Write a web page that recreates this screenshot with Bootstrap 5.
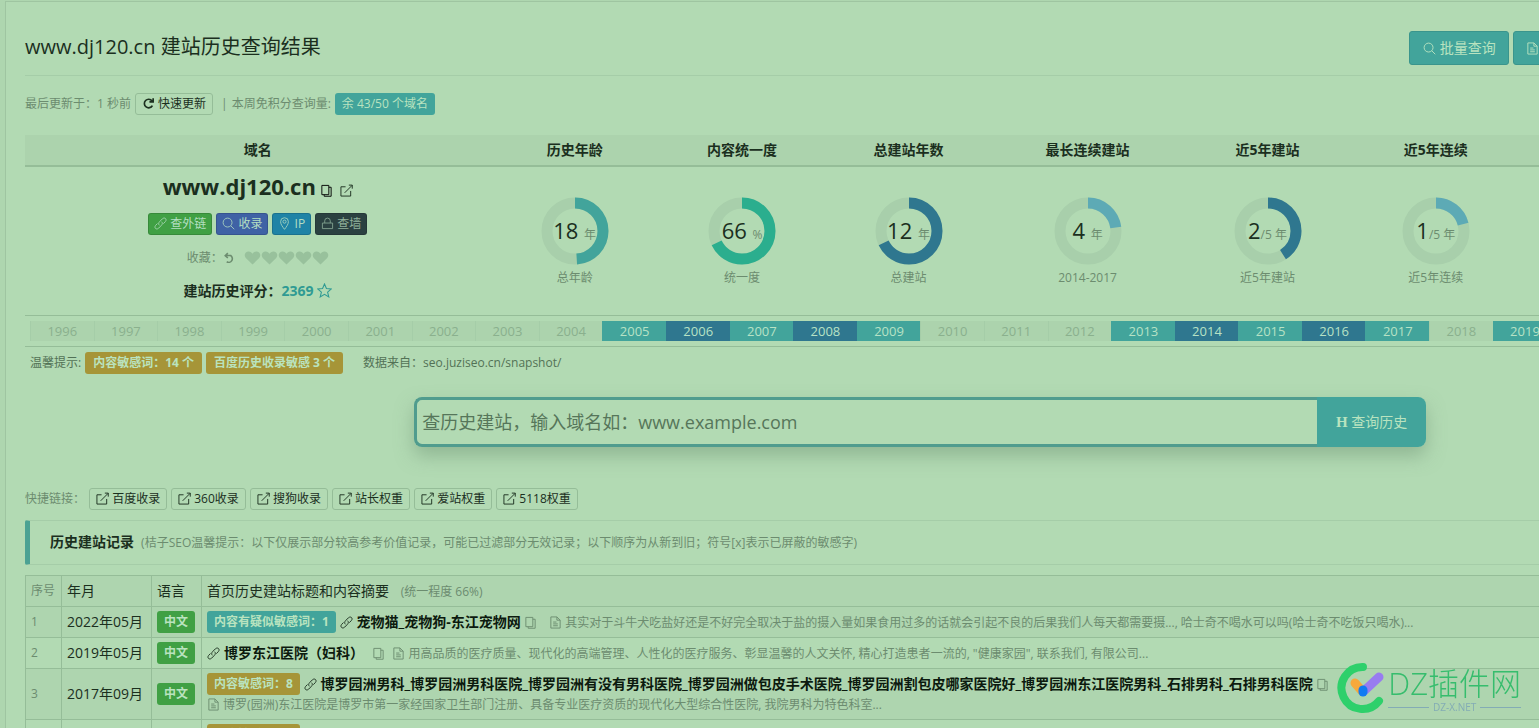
<!DOCTYPE html>
<html lang="zh-CN">
<head>
<meta charset="utf-8">
<meta name="viewport" content="width=device-width, initial-scale=1">
<title>www.dj120.cn 建站历史查询结果</title>
<link href="https://cdn.jsdelivr.net/npm/bootstrap@5.3.0/dist/css/bootstrap.min.css" rel="stylesheet">
<script src="https://cdn.jsdelivr.net/npm/bootstrap@5.3.0/dist/js/bootstrap.bundle.min.js" defer></script>
<style>
:root{--bg:#b2dab3;--shade:#acd3ad;--line:#95bd98;--soft:#a5cda8;--teal:#42a49b;--navy:#2f778f;--ink:#1b2f1e;--dim:#6c8c6f;--pale:#b9e3bf}
body{background:#aed6af;color:var(--ink);font:14px/20px "Open Sans","Noto Sans CJK SC",sans-serif;overflow-x:hidden}
/* the report is wider than the window and runs off its right side */
.panel{width:119vw;min-height:100vh;margin:1px 0 0 5px;padding:0 20px 0 19px;background:var(--bg);border:1px solid #9fc5a1;border-bottom:0}
svg.ico{width:13px;height:13px;fill:none;stroke:currentColor;stroke-width:1;vertical-align:-2px}
.top-bar{height:74px;padding-top:29px;border-bottom:1px solid var(--soft)}
.top-bar h1{font-size:20px;line-height:32px}
.f12{font-size:12px;line-height:22px}
.dim{color:var(--dim)}
.btn{--bs-btn-border-radius:3px}
.btn-teal,.btn-teal:hover{background:var(--teal);color:var(--pale);border:1px solid #3a958d;font-size:14px;line-height:20px;padding:6px 12px;min-width:100px}
.more-btn{width:302px;text-align:left}
.btn-mini{font-size:12px;line-height:20px;padding:0 6px;border:1px solid var(--line);color:var(--ink);white-space:nowrap}
.pill{display:inline-block;vertical-align:top;font-size:12px;line-height:22px;height:22px;padding:0 7px;border-radius:3px;color:var(--pale);font-weight:700;white-space:nowrap}
.bg-teal{background:var(--teal)}.bg-amber{background:#a69538}.bg-leaf{background:#40a044}.bg-indigo{background:#3f62a5}.bg-sky{background:#1f83a6}.bg-night{background:#2b4141}
.update-row{padding-top:17px;margin-bottom:20px}
.table{--bs-table-bg:transparent;--bs-table-color:var(--ink);margin:0;border-color:var(--line)}
.summary{table-layout:fixed;text-align:center}
.summary th{background:var(--shade);font-weight:700;padding:5px 0;border-bottom:2px solid var(--line)}
.summary td{padding:0;height:149px;border-bottom:1px solid var(--line)}
.summary td.align-middle{padding-top:4px}
.domain-name{font-size:22px;line-height:30px;font-weight:700;color:var(--ink)}
.domain-tag,.domain-tag:hover{color:#b4dfc2;border-color:#0002;padding:0 5px}
.domain-tag.bg-night{color:#8fb09a}
.domain-tag .ico{opacity:.85}
svg.heart{width:17px;height:14px}
svg.star{width:15px;height:15px}
.score{color:#2f9a93}
.icon-btn{border:0;background:none;padding:0}
.donut{display:grid;place-items:center;width:68px;height:68px;margin:0 auto 2px}
.donut>*{grid-area:1/1}
.donut svg{width:68px;height:68px;transform:rotate(-90deg)}
.donut circle{fill:none;stroke:#a8cfab;stroke-width:11}
.donut .arc{stroke:var(--c)}
.donut span{font-size:22px;line-height:28px;padding-top:3px;white-space:nowrap}
.donut small{font-size:12px;color:var(--dim)}
.years{padding:5px;border-bottom:1px solid var(--line)}
.years span{flex:1 1 0;text-align:center;font-size:13px;line-height:20px;background:var(--shade);color:#8ab08d;border-left:1px solid var(--soft)}
.years .on,.years .hot{color:#b7e2c5;background:var(--teal);border-color:transparent}
.years .on{border-left-color:var(--teal)}
.years .hot{background:var(--navy);border-left-color:var(--navy)}
.tips{padding:5px 5px 0;color:#527256}
.tips .pill{padding:0 8px}
.search{width:1012px;max-width:100%;margin:23px auto 41px;border-radius:8px;box-shadow:0 9px 18px #6f957580}
.search .form-control{height:50px;background:var(--bg);border:3px solid #509c8e;border-right:0;border-radius:8px 0 0 8px;font-size:18px;padding:0 5px;color:var(--ink)}
.search .form-control::placeholder{color:#56765a;opacity:1}
.search .btn{width:109px;border-radius:0 8px 8px 0;padding:0;border:0}
.serif-h{font:700 15px/20px "Liberation Serif",serif}
.notice{border:1px solid var(--soft);border-left:5px solid #4ba293;border-radius:2px;padding:10px 20px;line-height:22px;margin:10px 0}
.records th,.records td{padding:4px 5px;line-height:22px;border:1px solid var(--line)}
.records tr>:first-child{font-size:12px;color:var(--dim)}
.records th{font-weight:400}
.records thead th,.records tbody tr:nth-child(odd) td{background:#aed5af}
.records a{color:#0c1a0e;font-weight:700;text-decoration:none}
.excerpt{font-size:12px;line-height:20px;color:var(--dim)}
.watermark{position:fixed;right:18px;bottom:14px;pointer-events:none;color:#36bd6d}
.watermark b{display:block;font-size:31px;line-height:38px;font-weight:300}
.watermark i{flex:1;height:1px;background:#83acb5}
.watermark small{font-size:10px;line-height:10px;color:#83acb5}
</style>
</head>
<body>
<svg class="d-none">
<symbol id="search" viewBox="0 0 14 14"><circle cx="6" cy="6" r="4.8"/><path d="M9.5 9.5 13.2 13.2"/></symbol>
<symbol id="doc" viewBox="0 0 14 14"><path d="M2 1H8.5L12 4.5V13H2ZM8.5 1V4.5H12M4.5 6.5H8M4.5 8.5H9.5M4.5 10.5H9.5"/></symbol>
<symbol id="copy" viewBox="0 0 14 14"><path d="M2 1.5H9.5V11.5H2ZM9.5 3.5H12V13.2H4.5V11.5"/></symbol>
<symbol id="ext" viewBox="0 0 14 14"><path d="M6 3H1V13H11.5V7.5M5 9.5 13 1.5M9.5 1.2H13.2V5"/></symbol>
<symbol id="chain" viewBox="0 0 14 14"><path d="M6 9C4.5 8 5 6 6 5L9 2C10.5.6 12.3 1 12.8 2.3 13.3 3.5 12.8 4.3 12 5.2L10 7.2M8 5C9.5 6 9 8 8 9L5 12C3.5 13.4 1.8 13 1.2 11.7.8 10.5 1.2 9.7 2 8.8L3.8 7"/></symbol>
<symbol id="pin" viewBox="0 0 14 14"><path d="M7 13.3C5 10.5 2.8 8 2.8 5A4.2 4.2 0 0 1 11.2 5C11.2 8 9 10.5 7 13.3Z"/><circle cx="7" cy="5" r="1.7"/></symbol>
<symbol id="lock" viewBox="0 0 14 14"><path d="M1.5 6.5H12.5V12.5H1.5ZM4 6.5V4.2A3 3 0 0 1 10 4.2V6.5"/></symbol>
<symbol id="redo" viewBox="0 0 14 14"><path d="M11.2 9.2A4.6 4.6 0 1 1 10.8 4.2M12 1.3V5.2H8" stroke-width="1.8"/></symbol>
<symbol id="undo" viewBox="0 0 14 14"><path d="M3 3.8H8.2A3.8 3.8 0 1 1 4 10.5M5.2 1.2 2.4 3.9 5.2 6.5" stroke-width="1.7"/></symbol>
<symbol id="heart" viewBox="0 0 16 14"><path d="M8 13.6 1.3 7C-1.3 3.5 1.2.4 4 .4 6 .4 7.3 1.6 8 2.8 8.7 1.6 10 .4 12 .4 14.8.4 17.3 3.5 14.7 7Z" fill="#98c19c" stroke="none"/></symbol>
<symbol id="star" viewBox="0 0 14 14"><path d="M7 .9 8.8 5.1 13.4 5.5 9.9 8.5 11 13 7 10.6 3 13 4.1 8.5.6 5.5 5.2 5.1Z"/></symbol>
</svg>
<main class="panel">
<header class="top-bar d-flex justify-content-between">
<h1 class="fw-normal m-0">www.dj120.cn 建站历史查询结果</h1>
<div class="d-flex gap-1 align-items-start"><button class="btn btn-teal"><svg class="ico"><use href="#search"/></svg> 批量查询</button><button class="btn btn-teal more-btn" aria-label="导出"><svg class="ico"><use href="#doc"/></svg></button></div>
</header>
<div class="update-row d-flex align-items-center gap-1 f12 dim"><span>最后更新于：1 秒前</span><button class="btn btn-mini"><svg class="ico"><use href="#redo"/></svg> 快速更新</button><span class="ms-1">|</span><span>本周免积分查询量:</span><span class="pill bg-teal fw-normal">余 43/50 个域名</span></div>
<table class="table summary">
<colgroup><col style="width:26%"><col style="width:9.4%"><col style="width:9.3%"><col style="width:9.3%"><col style="width:10.7%"><col style="width:9.4%"><col style="width:9.4%"><col></colgroup>
<thead><tr><th>域名</th><th>历史年龄</th><th>内容统一度</th><th>总建站年数</th><th>最长连续建站</th><th>近5年建站</th><th>近5年连续</th><th></th></tr></thead>
<tbody><tr>
<td class="align-top"><div class="pt-1"><span class="domain-name">www.dj120.cn</span> <button class="icon-btn" aria-label="复制"><svg class="ico"><use href="#copy"/></svg></button>&nbsp; <a class="text-reset" href="#" aria-label="打开"><svg class="ico"><use href="#ext"/></svg></a></div>
<div class="d-flex justify-content-center gap-1 mt-2 pt-1"><a href="#" class="btn btn-mini bg-leaf domain-tag"><svg class="ico"><use href="#chain"/></svg> 查外链</a><a href="#" class="btn btn-mini bg-indigo domain-tag"><svg class="ico"><use href="#search"/></svg> 收录</a><a href="#" class="btn btn-mini bg-sky domain-tag"><svg class="ico"><use href="#pin"/></svg> IP</a><a href="#" class="btn btn-mini bg-night domain-tag"><svg class="ico"><use href="#lock"/></svg> 查墙</a></div>
<div class="d-flex justify-content-center align-items-center f12 dim mt-2 pt-1"><span>收藏：</span><svg class="ico me-2"><use href="#undo"/></svg><svg class="ico heart"><use href="#heart"/></svg><svg class="ico heart"><use href="#heart"/></svg><svg class="ico heart"><use href="#heart"/></svg><svg class="ico heart"><use href="#heart"/></svg><svg class="ico heart"><use href="#heart"/></svg></div>
<div class="fw-bold mt-2 pt-1">建站历史评分：<span class="score">2369 <svg class="ico star"><use href="#star"/></svg></span></div></td>
<td class="align-middle"><div class="donut" style="--c:#42a49b"><svg viewBox="0 0 68 68"><circle cx="34" cy="34" r="28"/><circle class="arc" cx="34" cy="34" r="28" pathLength="100" stroke-dasharray="49 100"/></svg><span>18 <small>年</small></span></div><div class="f12 dim">总年龄</div></td>
<td class="align-middle"><div class="donut" style="--c:#2bae8e"><svg viewBox="0 0 68 68"><circle cx="34" cy="34" r="28"/><circle class="arc" cx="34" cy="34" r="28" pathLength="100" stroke-dasharray="68 100"/></svg><span>66 <small>%</small></span></div><div class="f12 dim">统一度</div></td>
<td class="align-middle"><div class="donut" style="--c:#2f778f"><svg viewBox="0 0 68 68"><circle cx="34" cy="34" r="28"/><circle class="arc" cx="34" cy="34" r="28" pathLength="100" stroke-dasharray="68 100"/></svg><span>12 <small>年</small></span></div><div class="f12 dim">总建站</div></td>
<td class="align-middle"><div class="donut" style="--c:#5daab5"><svg viewBox="0 0 68 68"><circle cx="34" cy="34" r="28"/><circle class="arc" cx="34" cy="34" r="28" pathLength="100" stroke-dasharray="23 100"/></svg><span>4 <small>年</small></span></div><div class="f12 dim">2014-2017</div></td>
<td class="align-middle"><div class="donut" style="--c:#2f778f"><svg viewBox="0 0 68 68"><circle cx="34" cy="34" r="28"/><circle class="arc" cx="34" cy="34" r="28" pathLength="100" stroke-dasharray="41 100"/></svg><span>2<small>/5 年</small></span></div><div class="f12 dim">近5年建站</div></td>
<td class="align-middle"><div class="donut" style="--c:#5daab5"><svg viewBox="0 0 68 68"><circle cx="34" cy="34" r="28"/><circle class="arc" cx="34" cy="34" r="28" pathLength="100" stroke-dasharray="21 100"/></svg><span>1<small>/5 年</small></span></div><div class="f12 dim">近5年连续</div></td>
<td></td>
</tr></tbody></table>
<div class="years d-flex"><span>1996</span><span>1997</span><span>1998</span><span>1999</span><span>2000</span><span>2001</span><span>2002</span><span>2003</span><span>2004</span><span class="on">2005</span><span class="hot">2006</span><span class="on">2007</span><span class="hot">2008</span><span class="on">2009</span><span>2010</span><span>2011</span><span>2012</span><span class="on">2013</span><span class="hot">2014</span><span class="on">2015</span><span class="hot">2016</span><span class="on">2017</span><span>2018</span><span class="on">2019</span><span>2020</span><span>2021</span><span class="on">2022</span><span>2023</span></div>
<div class="d-flex gap-1 f12 tips"><span>温馨提示:</span><span class="pill bg-amber">内容敏感词：14 个</span><span class="pill bg-amber">百度历史收录敏感 3 个</span><span class="ms-3">数据来自：seo.juziseo.cn/snapshot/</span></div>
<form class="search input-group"><input class="form-control" type="text" aria-label="域名" placeholder="查历史建站，输入域名如：www.example.com"><button type="button" class="btn btn-teal"><span class="serif-h">H</span> 查询历史</button></form>
<div class="d-flex gap-1 f12 dim"><span>快捷链接：</span><a href="#" class="btn btn-mini"><svg class="ico"><use href="#ext"/></svg> 百度收录</a><a href="#" class="btn btn-mini"><svg class="ico"><use href="#ext"/></svg> 360收录</a><a href="#" class="btn btn-mini"><svg class="ico"><use href="#ext"/></svg> 搜狗收录</a><a href="#" class="btn btn-mini"><svg class="ico"><use href="#ext"/></svg> 站长权重</a><a href="#" class="btn btn-mini"><svg class="ico"><use href="#ext"/></svg> 爱站权重</a><a href="#" class="btn btn-mini"><svg class="ico"><use href="#ext"/></svg> 5118权重</a></div>
<div class="notice"><b>历史建站记录</b><span class="f12 dim ms-1"> (桔子SEO温馨提示：以下仅展示部分较高参考价值记录，可能已过滤部分无效记录；以下顺序为从新到旧；符号[x]表示已屏蔽的敏感字)</span></div>
<table class="table records">
<colgroup><col style="width:36px"><col style="width:90px"><col style="width:50px"><col></colgroup>
<thead><tr><th>序号</th><th>年月</th><th>语言</th><th>首页历史建站标题和内容摘要 <span class="excerpt ms-2">(统一程度 66%)</span></th></tr></thead>
<tbody class="align-middle">
<tr><td>1</td><td>2022年05月</td><td><span class="pill bg-leaf">中文</span></td><td><span class="pill bg-teal">内容有疑似敏感词：1</span> <svg class="ico me-1"><use href="#chain"/></svg><a href="#">宠物猫_宠物狗-东江宠物网</a> <button class="icon-btn dim" aria-label="复制"><svg class="ico"><use href="#copy"/></svg></button> <span class="excerpt ms-2"><svg class="ico"><use href="#doc"/></svg> 其实对于斗牛犬吃盐好还是不好完全取决于盐的摄入量如果食用过多的话就会引起不良的后果我们人每天都需要摄..., 哈士奇不喝水可以吗(哈士奇不吃饭只喝水)...</span></td></tr>
<tr><td>2</td><td>2019年05月</td><td><span class="pill bg-leaf">中文</span></td><td><svg class="ico me-1"><use href="#chain"/></svg><a href="#">博罗东江医院（妇科）</a> <button class="icon-btn dim ms-1" aria-label="复制"><svg class="ico"><use href="#copy"/></svg></button> <span class="excerpt ms-1"><svg class="ico"><use href="#doc"/></svg> 用高品质的医疗质量、现代化的高端管理、人性化的医疗服务、彰显温馨的人文关怀, 精心打造患者一流的, "健康家园", 联系我们, 有限公司...</span></td></tr>
<tr><td>3</td><td>2017年09月</td><td><span class="pill bg-leaf">中文</span></td><td><span class="pill bg-amber">内容敏感词：8</span> <svg class="ico me-1"><use href="#chain"/></svg><a href="#">博罗园洲男科_博罗园洲男科医院_博罗园洲有没有男科医院_博罗园洲做包皮手术医院_博罗园洲割包皮哪家医院好_博罗园洲东江医院男科_石排男科_石排男科医院</a> <button class="icon-btn dim" aria-label="复制"><svg class="ico"><use href="#copy"/></svg></button><div class="excerpt"><svg class="ico"><use href="#doc"/></svg> 博罗(园洲)东江医院是博罗市第一家经国家卫生部门注册、具备专业医疗资质的现代化大型综合性医院, 我院男科为特色科室...</div></td></tr>
<tr><td></td><td></td><td></td><td><span class="pill bg-amber">内容敏感词：8</span></td></tr>
</tbody></table>
</main>
<div class="watermark d-flex align-items-center"><svg width="52" height="52" viewBox="0 0 52 52" fill="none" stroke-linecap="round"><path d="M27 5A21 21 0 1 0 43 39" stroke="#2ed06b" stroke-width="8"/><path d="M19 21 26 29" stroke="#f7a93b" stroke-width="9"/><path d="M28 29 43 15" stroke="#987cf0" stroke-width="9"/><path d="M27 28V30" stroke="#117bf2" stroke-width="9"/></svg><div><b>DZ插件网</b><div class="d-flex align-items-center gap-1"><i></i><small>DZ-X.NET</small><i></i></div></div></div>
</body>
</html>
